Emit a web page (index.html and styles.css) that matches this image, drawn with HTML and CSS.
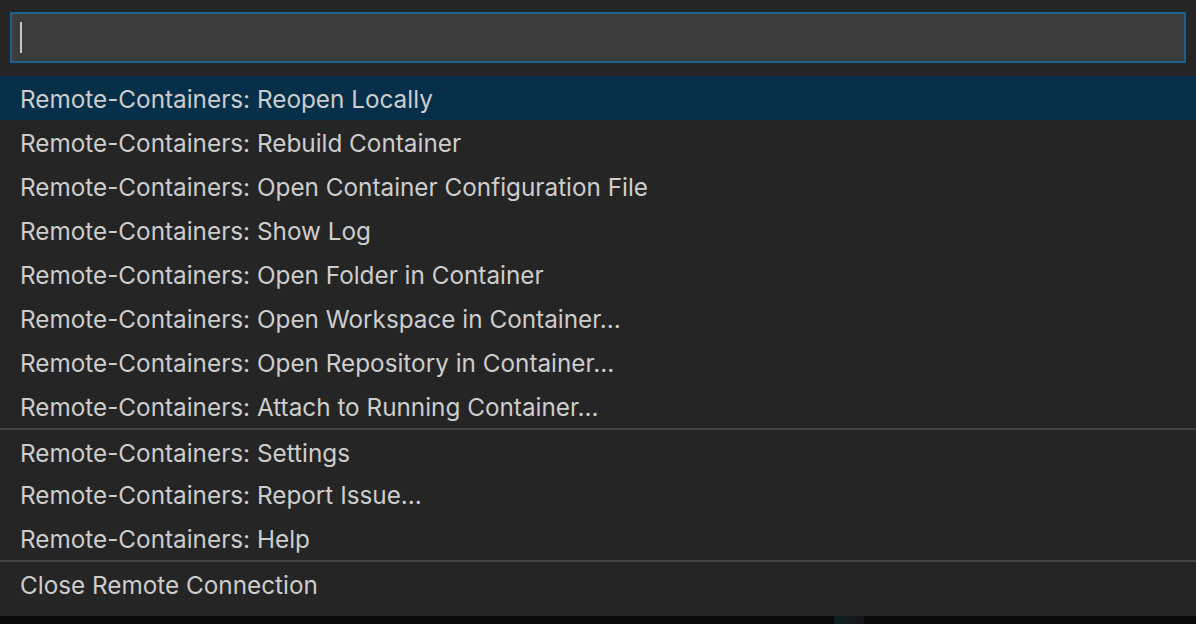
FILE: index.html
```html
<!DOCTYPE html>
<html>
<head>
<meta charset="utf-8">
<link rel="stylesheet" href="styles.css">
</head>
<body>
<div class="quick-pick">
  <div class="input-box"><span class="caret"></span></div>
  <ul class="list">
    <li class="item selected">Remote-Containers: Reopen Locally</li>
    <li class="item">Remote-Containers: Rebuild Container</li>
    <li class="item">Remote-Containers: Open Container Configuration File</li>
    <li class="item">Remote-Containers: Show Log</li>
    <li class="item">Remote-Containers: Open Folder in Container</li>
    <li class="item">Remote-Containers: Open Workspace in Container...</li>
    <li class="item">Remote-Containers: Open Repository in Container...</li>
    <li class="item">Remote-Containers: Attach to Running Container...</li>
    <li class="item separator">Remote-Containers: Settings</li>
    <li class="item">Remote-Containers: Report Issue...</li>
    <li class="item">Remote-Containers: Help</li>
    <li class="item separator">Close Remote Connection</li>
  </ul>
</div>
<div class="below"><span class="glint"></span></div>
</body>
</html>
```

FILE: styles.css
```css
html, body {
  margin: 0;
  padding: 0;
  background: #0b0b0b;
}
body {
  width: 1196px;
  height: 624px;
  overflow: hidden;
  font-family: Inter, "Noto Sans", sans-serif;
}
.quick-pick {
  background: #252526;
  height: 616px;
  box-sizing: border-box;
  padding-top: 12px;
  display: flex;
  flex-direction: column;
}
.input-box {
  margin: 0 10px;
  height: 51px;
  box-sizing: border-box;
  background: #3c3c3c;
  border: 2px solid #1c6193;
  display: flex;
  align-items: center;
  padding-left: 8px;
}
.caret {
  width: 2px;
  height: 31px;
  background: #c8c8c8;
}
.list {
  list-style: none;
  margin: 13px 0 0 0;
  padding: 0;
}
.item {
  height: 44px;
  box-sizing: border-box;
  display: flex;
  align-items: center;
  padding-left: 20px;
  padding-top: 1px;
  font-size: 24.3px;
  color: #cdcdcd;
  white-space: nowrap;
}
.item.selected {
  background: #062f4a;
}
.item.separator {
  border-top: 2px solid #444447;
  padding-top: 3px;
}
.below {
  height: 8px;
  position: relative;
}
.glint {
  position: absolute;
  left: 834px;
  top: 0;
  width: 30px;
  height: 8px;
  background: linear-gradient(90deg, #0f2024, #161616);
}
```
